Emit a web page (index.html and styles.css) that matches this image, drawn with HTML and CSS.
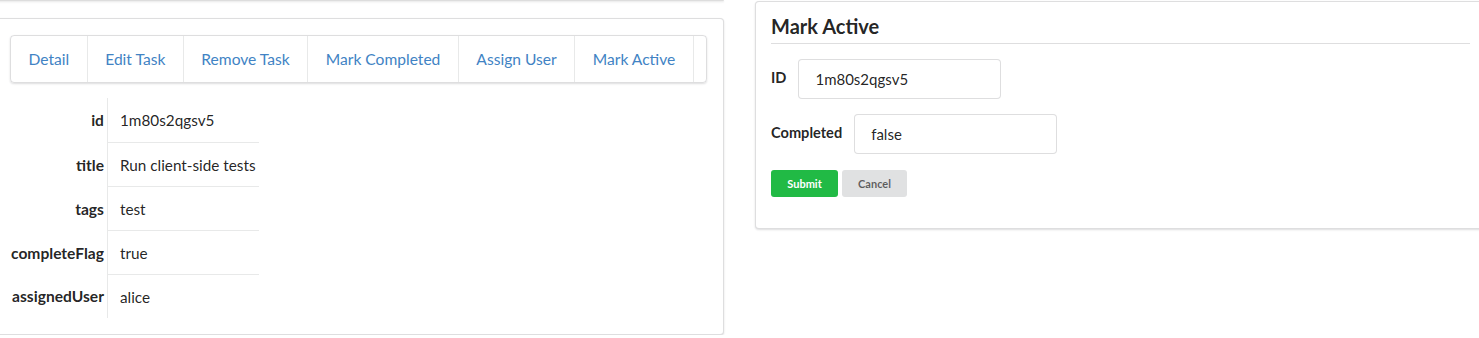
FILE: index.html
```html
<!DOCTYPE html>
<html>
<head>
    <title>Task</title>
    <link rel="stylesheet" href="styles.css">
</head>
<body>
    <div class="page">
        <div class="column">
            <div class="segment stub"></div>

            <div class="segment">
                <div class="menu">
                    <a class="item" href="#">Detail</a>
                    <a class="item" href="#">Edit Task</a>
                    <a class="item" href="#">Remove Task</a>
                    <a class="item" href="#">Mark Completed</a>
                    <a class="item" href="#">Assign User</a>
                    <a class="item" href="#">Mark Active</a>
                    <span class="item spacer"></span>
                </div>

                <table class="detail-table">
                    <tr><th>id</th><td>1m80s2qgsv5</td></tr>
                    <tr><th>title</th><td>Run client-side tests</td></tr>
                    <tr><th>tags</th><td>test</td></tr>
                    <tr><th>completeFlag</th><td>true</td></tr>
                    <tr><th>assignedUser</th><td>alice</td></tr>
                </table>
            </div>
        </div>

        <div class="column">
            <div class="segment form-card">
                <h3 class="dividing-header">Mark Active</h3>
                <form id="mark-active-form">
                    <div class="field">
                        <label for="task-id">ID</label>
                        <input type="text" id="task-id" name="id" value="1m80s2qgsv5">
                    </div>
                    <div class="field">
                        <label for="completed">Completed</label>
                        <input type="text" id="completed" name="completed" value="false">
                    </div>
                    <div class="actions">
                        <button type="button" class="btn submit">Submit</button>
                        <button type="button" class="btn cancel">Cancel</button>
                    </div>
                </form>
            </div>
        </div>
    </div>
</body>
</html>
```

FILE: styles.css
```css
body {
    font-family: Lato, "Open Sans", sans-serif;
    font-size: 16px;
    color: rgba(0, 0, 0, 0.87);
    margin: 0;
    padding: 0;
    background-color: #fff;
}

.page {
    display: flex;
    gap: 31px;
    margin-left: -7px;
}

.column {
    width: 731px;
    flex: none;
}

.segment {
    background-color: #fff;
    border: 1px solid rgba(34, 36, 38, 0.15);
    border-radius: 4px;
    box-shadow: 0 1px 2px 0 rgba(34, 36, 38, 0.15);
    padding: 16px;
}

/* bottom edge of the panel above */
.stub {
    height: 0;
    padding: 0;
    border-top: none;
    border-radius: 0 0 4px 4px;
    margin-bottom: 17px;
}

.menu {
    display: flex;
    height: 46px;
    border: 1px solid rgba(34, 36, 38, 0.15);
    border-radius: 4px;
    box-shadow: 0 1px 2px 0 rgba(34, 36, 38, 0.15);
}

.menu .item {
    display: flex;
    align-items: center;
    flex: none;
    white-space: nowrap;
    padding: 0 17.5px 1px;
    font-size: 15.6px;
    color: #4183c4;
    text-decoration: none;
    border-right: 1px solid rgba(34, 36, 38, 0.1);
}

.menu .spacer {
    padding: 0;
    flex: 1;
    border-right: none;
}

.detail-table {
    border-collapse: collapse;
    margin-top: 15px;
}

.detail-table th,
.detail-table td {
    height: 43px;
    padding: 0;
    line-height: 20px;
    white-space: nowrap;
}

.detail-table tr:first-child th,
.detail-table tr:first-child td {
    height: 44px;
}

.detail-table th {
    text-align: right;
    font-size: 15.6px;
    font-weight: 700;
    padding: 0 3px 0 1px;
    border-right: 1px solid rgba(34, 36, 38, 0.1);
}

.detail-table td {
    font-size: 15.3px;
    padding: 0 3px 0 12px;
}

.detail-table tr + tr td {
    border-top: 1px solid rgba(34, 36, 38, 0.1);
}

.form-card {
    margin-top: 1px;
    padding: 11px 15px 31px;
}

.dividing-header {
    font-size: 20px;
    font-weight: 700;
    margin: 0 0 15px;
    padding-bottom: 4px;
    line-height: 26px;
    border-bottom: 1px solid rgba(34, 36, 38, 0.15);
}

.field {
    display: flex;
    align-items: center;
    gap: 12px;
    margin-bottom: 15px;
}

.field label {
    font-weight: 700;
    font-size: 14.6px;
    margin-bottom: 3px;
}

.field input {
    width: 203px;
    height: 40px;
    box-sizing: border-box;
    padding: 0 16px;
    font-family: inherit;
    font-size: 15px;
    color: rgba(0, 0, 0, 0.87);
    border: 1px solid rgba(34, 36, 38, 0.15);
    border-radius: 4px;
}

.actions {
    display: flex;
    gap: 4px;
    padding-top: 1px;
}

.btn {
    height: 27px;
    padding: 0 16px;
    font-family: inherit;
    font-size: 11px;
    font-weight: 700;
    border: none;
    border-radius: 3px;
    cursor: pointer;
}

.btn.submit {
    background-color: #21ba45;
    color: #fff;
    width: 67px;
}

.btn.cancel {
    background-color: #e0e1e2;
    color: rgba(0, 0, 0, 0.6);
    width: 65px;
}
```
